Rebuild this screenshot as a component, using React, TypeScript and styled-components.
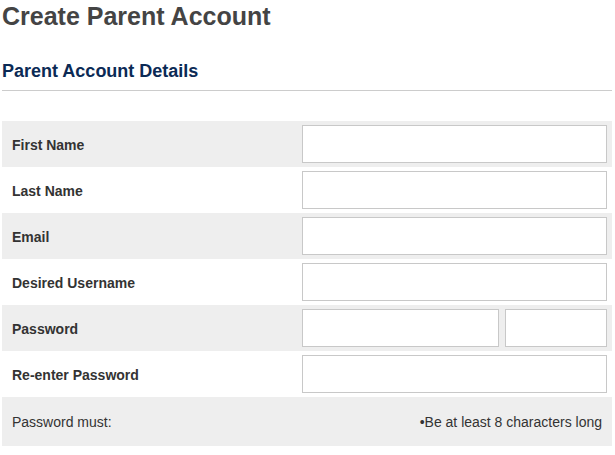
import React from "react";
import styled, { createGlobalStyle } from "styled-components";

const Global = createGlobalStyle`
  html, body { margin: 0; padding: 0; background: #fff; }
  body { font-family: "Liberation Sans", Arial, Helvetica, sans-serif; }
  * { box-sizing: border-box; }
`;

const Page = styled.div`
  width: 610px;
  margin-left: 2px;
`;

const Title = styled.h1`
  margin: 0;
  padding-top: 2px;
  font-size: 25px;
  line-height: 28px;
  font-weight: bold;
  color: #444444;
`;

const SectionTitle = styled.h2`
  margin: 30px 0 0;
  font-size: 18px;
  line-height: 22px;
  font-weight: bold;
  color: #0b2a55;
`;

const Divider = styled.hr`
  margin: 8px 0 0;
  border: 0;
  border-top: 1px solid #cccccc;
  height: 0;
`;

const Form = styled.div`
  margin-top: 30px;
  display: flex;
  flex-direction: column;
`;

const Row = styled.div<{ $shaded: boolean }>`
  display: grid;
  grid-template-columns: 300px 1fr;
  align-items: center;
  height: 46px;
  background: ${(p) => (p.$shaded ? "#eeeeee" : "#ffffff")};
`;

const Label = styled.label`
  padding-left: 10px;
  padding-top: 1px;
  font-size: 14px;
  font-weight: bold;
  color: #333333;
`;

const Fields = styled.div`
  display: flex;
  gap: 6px;
  padding-right: 5px;
`;

const Input = styled.input<{ $w?: number }>`
  height: 38px;
  width: ${(p) => (p.$w ? `${p.$w}px` : "100%")};
  flex: ${(p) => (p.$w ? "none" : "1")};
  border: 1px solid #c8c8c8;
  background: #fff;
  margin: 0;
  padding: 0 6px;
  font: inherit;
  outline: none;
`;

const NoteRow = styled.div`
  display: flex;
  justify-content: space-between;
  align-items: center;
  height: 49px;
  padding: 0 10px;
  background: #eeeeee;
  font-size: 14px;
  color: #333333;
`;

const fields = ["First Name", "Last Name", "Email", "Desired Username"];

export default function App() {
  return (
    <>
      <Global />
      <Page>
        <Title>Create Parent Account</Title>
        <SectionTitle>Parent Account Details</SectionTitle>
        <Divider />
        <Form>
          {fields.map((f, i) => (
            <Row key={f} $shaded={i % 2 === 0}>
              <Label>{f}</Label>
              <Fields>
                <Input type="text" />
              </Fields>
            </Row>
          ))}
          <Row $shaded>
            <Label>Password</Label>
            <Fields>
              <Input type="password" $w={197} />
              <Input type="password" />
            </Fields>
          </Row>
          <Row $shaded={false}>
            <Label>Re-enter Password</Label>
            <Fields>
              <Input type="password" />
            </Fields>
          </Row>
          <NoteRow>
            <span>Password must:</span>
            <span>•Be at least 8 characters long</span>
          </NoteRow>
        </Form>
      </Page>
    </>
  );
}
